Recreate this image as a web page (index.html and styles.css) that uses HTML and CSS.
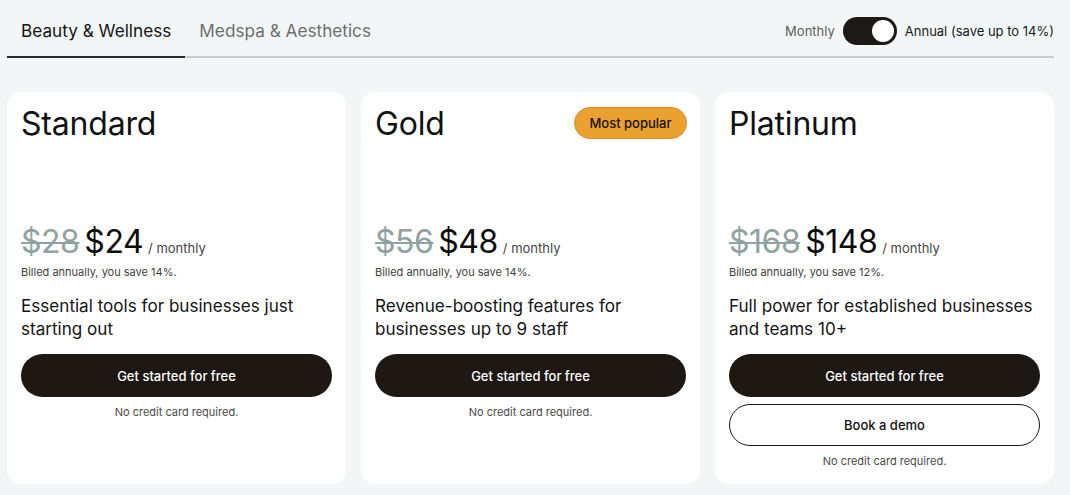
FILE: index.html
```html
<!DOCTYPE html>
<html lang="en">
<head>
<meta charset="utf-8">
<title>Pricing</title>
<link rel="stylesheet" href="styles.css">
</head>
<body>
<div class="page">
  <div class="topbar">
    <div class="tabs">
      <div class="tab active">Beauty &amp; Wellness</div>
      <div class="tab">Medspa &amp; Aesthetics</div>
    </div>
    <div class="billing">
      <span class="bill-label muted">Monthly</span>
      <span class="switch"><span class="knob"></span></span>
      <span class="bill-label">Annual (save up to 14%)</span>
    </div>
  </div>

  <div class="cards">
    <div class="card">
      <div class="card-head">
        <h2 class="plan">Standard</h2>
      </div>
      <div class="price-row">
        <span class="old">$28</span>
        <span class="new">$24</span>
        <span class="per">/ monthly</span>
      </div>
      <p class="billed">Billed annually, you save 14%.</p>
      <p class="desc">Essential tools for businesses just starting out</p>
      <a class="btn btn-dark">Get started for free</a>
      <p class="note">No credit card required.</p>
    </div>

    <div class="card">
      <div class="card-head">
        <h2 class="plan">Gold</h2>
        <span class="badge">Most popular</span>
      </div>
      <div class="price-row">
        <span class="old">$56</span>
        <span class="new">$48</span>
        <span class="per">/ monthly</span>
      </div>
      <p class="billed">Billed annually, you save 14%.</p>
      <p class="desc">Revenue-boosting features for businesses up to 9 staff</p>
      <a class="btn btn-dark">Get started for free</a>
      <p class="note">No credit card required.</p>
    </div>

    <div class="card">
      <div class="card-head">
        <h2 class="plan">Platinum</h2>
      </div>
      <div class="price-row">
        <span class="old">$168</span>
        <span class="new">$148</span>
        <span class="per">/ monthly</span>
      </div>
      <p class="billed">Billed annually, you save 12%.</p>
      <p class="desc">Full power for established businesses and teams 10+</p>
      <a class="btn btn-dark">Get started for free</a>
      <a class="btn btn-outline">Book a demo</a>
      <p class="note">No credit card required.</p>
    </div>
  </div>
</div>
</body>
</html>
```

FILE: styles.css
```css
* { box-sizing: border-box; }

html, body {
  margin: 0;
  padding: 0;
  background: #f2f6f6;
  font-family: Inter, "Noto Sans", "Liberation Sans", sans-serif;
  color: #111111;
}

.page {
  width: 1070px;
  height: 495px;
  padding: 0 16px 0 7px;
  overflow: hidden;
}

.topbar {
  display: flex;
  justify-content: space-between;
  align-items: flex-end;
  height: 58px;
  border-bottom: 2px solid #c3d0ce;
}

.tabs {
  display: flex;
  align-items: flex-end;
}

.tab {
  font-size: 17.2px;
  letter-spacing: 0;
  padding: 0 14px 15px;
  height: 58px;
  display: flex;
  align-items: flex-end;
  color: #6e6e6e;
  margin-bottom: -2px;
  border-bottom: 2px solid transparent;
}

.tab.active {
  color: #151515;
  border-bottom-color: #2b2b2b;
}

.billing {
  display: flex;
  align-items: center;
  gap: 8px;
  align-self: flex-start;
  margin-top: 17px;
}

.bill-label {
  font-size: 13px;
  color: #1a1a1a;
}

.bill-label.muted { color: #5e5e5e; }

.switch {
  position: relative;
  width: 54px;
  height: 28px;
  border-radius: 14px;
  background: #1d1916;
  display: inline-block;
}

.knob {
  position: absolute;
  right: 3px;
  top: 3px;
  width: 22px;
  height: 22px;
  border-radius: 50%;
  background: #ffffff;
}

.cards {
  display: grid;
  grid-template-columns: repeat(3, 339px);
  gap: 15px;
  margin-top: 34px;
}

.card {
  background: #ffffff;
  border-radius: 14px;
  padding: 12px 14px 16px;
  display: flex;
  flex-direction: column;
  height: 392px;
}

.card-head {
  display: flex;
  justify-content: space-between;
  align-items: flex-start;
  height: 118px;
}

.plan {
  margin: 0;
  font-size: 32px;
  font-weight: 400;
  letter-spacing: -0.2px;
  line-height: 39px;
}

.badge {
  margin-top: 3px;
  margin-right: -1px;
  width: 113px;
  height: 32px;
  border-radius: 16px;
  background: #eba12f;
  border: 1px solid #d98e1c;
  font-size: 13px;
  font-weight: 500;
  color: #141008;
  display: flex;
  align-items: center;
  justify-content: center;
}

.price-row {
  display: flex;
  align-items: baseline;
  height: 40px;
  line-height: 40px;
}

.old {
  font-size: 32px;
  color: #8fa3a2;
  text-decoration: line-through;
  text-decoration-thickness: 2px;
  letter-spacing: -0.5px;
  margin-right: 5px;
}

.new {
  font-size: 32px;
  color: #0c0c0c;
  letter-spacing: -0.5px;
  margin-right: 5px;
}

.per {
  font-size: 13px;
  color: #444;
}

.billed {
  margin: 3px 0 0;
  font-size: 11px;
  line-height: 14px;
  color: #3e3e3e;
}

.desc {
  margin: 15px 0 0;
  font-size: 17.1px;
  line-height: 23px;
  letter-spacing: 0;
  color: #141414;
  height: 46px;
}

.btn {
  display: flex;
  align-items: center;
  justify-content: center;
  height: 43px;
  border-radius: 22px;
  font-size: 13px;
  font-weight: 500;
  text-decoration: none;
}

.btn-dark {
  margin-top: 14px;
  background: #1d1814;
  color: #ffffff;
}

.btn-outline {
  margin-top: 7px;
  background: #ffffff;
  color: #111;
  border: 1px solid #1d1814;
  height: 42px;
}

.note {
  margin: 8px 0 0;
  text-align: center;
  font-size: 11px;
  line-height: 14px;
  color: #4a4a4a;
}
```
